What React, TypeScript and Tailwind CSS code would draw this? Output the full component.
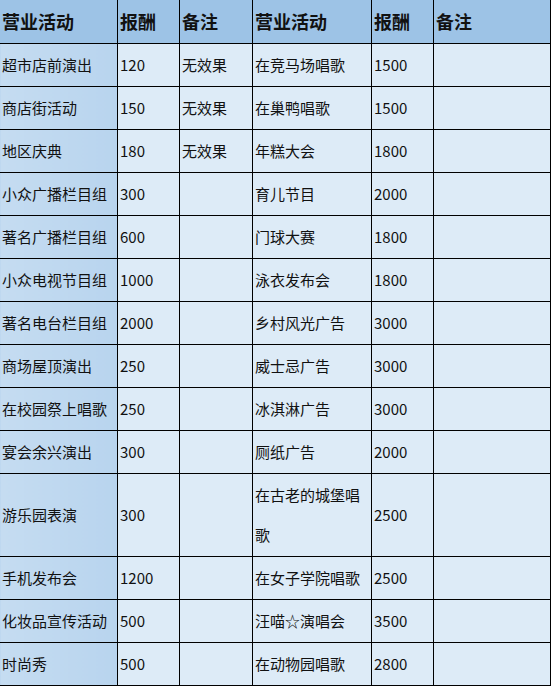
const rows: [string, string, string, string, string, string, boolean?][] = [
  ['超市店前演出', '120', '无效果', '在竞马场唱歌', '1500', ''],
  ['商店街活动', '150', '无效果', '在巢鸭唱歌', '1500', ''],
  ['地区庆典', '180', '无效果', '年糕大会', '1800', ''],
  ['小众广播栏目组', '300', '', '育儿节目', '2000', ''],
  ['著名广播栏目组', '600', '', '门球大赛', '1800', ''],
  ['小众电视节目组', '1000', '', '泳衣发布会', '1800', ''],
  ['著名电台栏目组', '2000', '', '乡村风光广告', '3000', ''],
  ['商场屋顶演出', '250', '', '威士忌广告', '3000', ''],
  ['在校园祭上唱歌', '250', '', '冰淇淋广告', '3000', ''],
  ['宴会余兴演出', '300', '', '厕纸广告', '2000', ''],
  ['游乐园表演', '300', '', '在古老的城堡唱歌', '2500', '', true],
  ['手机发布会', '1200', '', '在女子学院唱歌', '2500', ''],
  ['化妆品宣传活动', '500', '', '汪喵☆演唱会', '3500', ''],
  ['时尚秀', '500', '', '在动物园唱歌', '2800', ''],
];

const headers = ['营业活动', '报酬', '备注', '营业活动', '报酬', '备注'];
const widths = ['w-[118px]', 'w-[62px]', 'w-[73px]', 'w-[119px]', 'w-[62px]', 'w-[117px]'];

export default function App() {
  return (
    <div className="w-[551px] h-[686px] overflow-hidden bg-white font-['Noto_Sans_CJK_SC','Noto_Sans',sans-serif] text-[15px] text-[#111]">
      <table className="border-collapse table-fixed w-[552px] -mt-px -ml-px">
        <thead>
          <tr className="h-[44px]">
            {headers.map((h, i) => (
              <th
                key={i}
                className={`${widths[i]} border border-black bg-[#9dc3e6] text-left align-middle pl-[2px] text-[18px] font-bold`}
              >
                {h}
              </th>
            ))}
          </tr>
        </thead>
        <tbody>
          {rows.map((r, ri) => (
            <tr key={ri} className={r[6] ? 'h-[83px]' : 'h-[43px]'}>
              {r.slice(0, 6).map((c, ci) => (
                <td
                  key={ci}
                  className={`border border-black align-middle pl-[2px] pr-[2px] leading-[40px] ${
                    ci === 0 ? 'bg-gradient-to-r from-[#c5dcf1] to-[#b8d4ee]' : 'bg-[#ddebf7]'
                  }`}
                >
                  {c}
                </td>
              ))}
            </tr>
          ))}
        </tbody>
      </table>
    </div>
  );
}
